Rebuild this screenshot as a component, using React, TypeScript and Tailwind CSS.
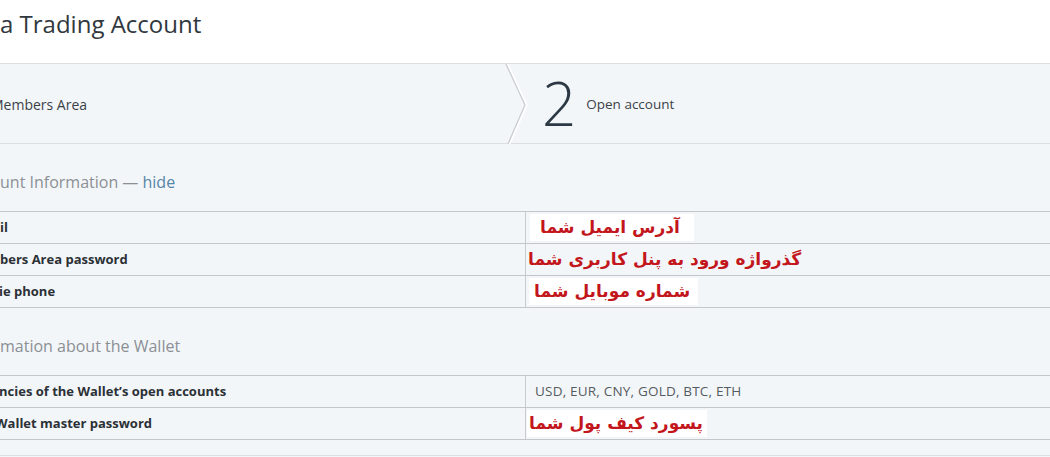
import React from "react";

const fa = "font-['DejaVu_Sans',sans-serif] font-bold text-[#c3161c]";

function Row({ label, children }: { label: React.ReactNode; children?: React.ReactNode }) {
  return (
    <div className="flex h-[32px] border-t border-[#c3c7cb]">
      <div className="w-[525px] shrink-0 flex items-center text-[13px] font-bold text-[#2b3136] whitespace-nowrap overflow-hidden">
        {label}
      </div>
      <div className="w-px bg-[#c8cbce]" />
      <div className="flex-1 flex items-center">{children}</div>
    </div>
  );
}

export default function App() {
  return (
    <div className="w-[1050px] h-[457px] overflow-hidden bg-white font-['Open_Sans',sans-serif]">
      <div className="h-[63px] pt-[8px]">
        <div className="text-[24px] leading-[32px] text-[#31383e] whitespace-nowrap">a Trading Account</div>
      </div>
      <div className="bg-[#f3f6f9] border-t border-[#dcdfe2]">
        <div className="h-[80px] flex items-center border-b border-[#dcdfe2]">
          <div className="w-[505px] text-[14px] text-[#3b4248] whitespace-nowrap pt-[2px]">
            <span className="ml-[-9px]">Members Area</span>
          </div>
          <svg width="26" height="80" viewBox="0 0 26 80" className="shrink-0">
            <polyline points="1,0 20,41 3,80" fill="none" stroke="#ffffff" strokeWidth="2" transform="translate(1.5,0)" />
            <polyline points="1,0 20,41 3,80" fill="none" stroke="#c9cdd1" strokeWidth="1.3" />
          </svg>
          <div className="ml-[11px] text-[60px] font-light leading-none text-[#2c3945] mt-[-2px]">2</div>
          <div className="ml-[10px] text-[13.5px] text-[#3b4248] pt-[2px]">Open account</div>
        </div>
        <div className="h-[67px] pt-[28px]">
          <div className="text-[16px] leading-[20px] text-[#8b9095] whitespace-nowrap">
            unt Information — <span className="text-[#5585a8]">hide</span>
          </div>
        </div>
        <Row label="il">
          <span className={`ml-[4px] bg-white pl-[10px] pr-[14px] h-[27px] flex items-center text-[17px] ${fa}`} dir="rtl">
            آدرس ایمیل شما
          </span>
        </Row>
        <Row label="bers Area password">
          <span className={`ml-[2px] text-[17px] ${fa}`} dir="rtl">گذرواژه ورود به پنل کاربری شما</span>
        </Row>
        <div className="border-b border-[#c3c7cb]">
          <Row label={<span className="ml-[-1px]">ie phone</span>}>
            <span className={`ml-[3px] bg-white pl-[5px] pr-[8px] h-[27px] flex items-center text-[17px] ${fa}`} dir="rtl">
              شماره موبایل شما
            </span>
          </Row>
        </div>
        <div className="h-[67px] pt-[28px]">
          <div className="text-[16px] leading-[20px] text-[#8b9095] whitespace-nowrap">mation about the Wallet</div>
        </div>
        <Row label={<span className="ml-[-1px]">ncies of the Wallet’s open accounts</span>}>
          <span className="ml-[9px] text-[13.5px] tracking-[0.2px] text-[#555b60]">USD, EUR, CNY, GOLD, BTC, ETH</span>
        </Row>
        <div className="border-b border-[#c3c7cb]">
          <Row label={<span className="ml-[-5px]">Wallet master password</span>}>
            <span className={`ml-[1px] bg-white pl-[2px] pr-[4px] h-[27px] flex items-center text-[17px] ${fa}`} dir="rtl">
              پسورد کیف پول شما
            </span>
          </Row>
        </div>
        <div className="h-[15px]" />
        <div className="border-t border-[#dcdfe2] h-[10px]" />
      </div>
    </div>
  );
}
